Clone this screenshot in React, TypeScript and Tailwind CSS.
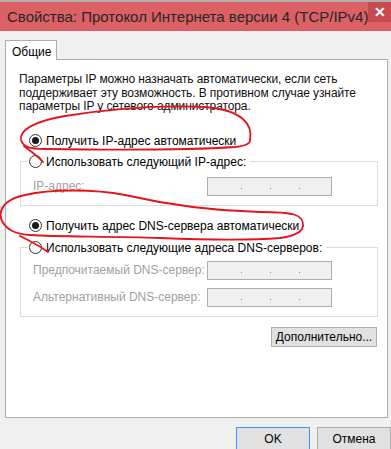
import React from "react";

const font = { fontFamily: '"Liberation Sans", Arial, sans-serif' };

const Radio = ({ checked, label }: { checked?: boolean; label: string }) => (
  <span className="flex items-center h-[14px]">
    <span className="w-[13px] h-[13px] rounded-full border border-[#333333] bg-white flex items-center justify-center shrink-0">
      {checked && <span className="w-[7px] h-[7px] rounded-full bg-[#1a1a1a]" />}
    </span>
    <span className="ml-[4px] text-[12px] text-black whitespace-nowrap">{label}</span>
  </span>
);

const IpBox = () => (
  <div className="w-[125px] h-[19px] border border-[#adadad] bg-[#f0f0f0] flex items-center pl-[33px] gap-[28px] shrink-0">
    <span className="w-[1px] h-[1px] mt-[5px] bg-[#9a7a9c]" />
    <span className="w-[1px] h-[1px] mt-[5px] bg-[#9a7a9c]" />
    <span className="w-[1px] h-[1px] mt-[5px] bg-[#9a7a9c]" />
  </div>
);

const FieldRow = ({ label }: { label: string }) => (
  <div className="flex items-center">
    <span className="w-[186px] pl-[12px] text-[12px] text-[#a0a0a0] whitespace-nowrap">{label}</span>
    <IpBox />
  </div>
);

export default function App() {
  return (
    <div className="relative w-[391px] h-[449px] overflow-hidden bg-[#f0f0f0]" style={font}>
      <div className="h-[2px] bg-[#b4aeac]" />
      <div className="flex h-[29px] bg-[#dc6165]">
        <div className="flex-1 pl-[7px] pt-[5px] text-[15px] text-[#262626] whitespace-nowrap leading-[20px]">
          Свойства: Протокол Интернета версии 4 (TCP/IPv4)
        </div>
        <div className="w-[23px] h-[20px] bg-[#c94a4e] flex items-center justify-center text-white text-[14px] font-bold leading-none">
          ✕
        </div>
      </div>
      <div className="flex h-[418px]">
        <div className="w-[2px] bg-[#d9585c]" />
        <div className="flex-1 pl-[5px] pt-[9px]">
          <div className="relative z-10 w-[52px] h-[20px] -mb-[1px] border-l border-t border-r border-[#adadad] bg-white pl-[6px] pt-[2px] text-[12px] text-black">
            Общие
          </div>
          <div className="w-[383px] h-[359px] border border-[#adadad] bg-white pt-[13px] pl-[13px] pr-[9px]">
            <p className="text-[12px] leading-[13.5px] text-[#111] tracking-[-0.1px]">
              Параметры IP можно назначать автоматически, если сеть
              <br />
              поддерживает эту возможность. В противном случае узнайте
              <br />
              параметры IP у сетевого администратора.
            </p>
            <div className="mt-[20px] pl-[10px]">
              <Radio checked label="Получить IP-адрес автоматически" />
            </div>
            <fieldset className="mt-[7px] ml-[1px] border border-[#dcdcdc] px-0 pb-[9px]">
              <legend className="ml-[7px] pl-[1px] pr-[4px]">
                <Radio label="Использовать следующий IP-адрес:" />
              </legend>
              <div className="mt-[8px]">
                <FieldRow label="IP-адрес:" />
              </div>
            </fieldset>
            <div className="mt-[13px] pl-[10px]">
              <Radio checked label="Получить адрес DNS-сервера автоматически" />
            </div>
            <fieldset className="mt-[8px] ml-[1px] border border-[#dcdcdc] px-0 pb-[9px]">
              <legend className="ml-[7px] pl-[1px] pr-[4px]">
                <Radio label="Использовать следующие адреса DNS-серверов:" />
              </legend>
              <div className="mt-[6px] flex flex-col gap-[8px]">
                <FieldRow label="Предпочитаемый DNS-сервер:" />
                <FieldRow label="Альтернативный DNS-сервер:" />
              </div>
            </fieldset>
            <div className="mt-[10px] flex justify-end pr-[1px]">
              <button className="w-[106px] h-[20px] border border-[#adadad] bg-[#e1e1e1] text-[12px] text-black">
                Дополнительно...
              </button>
            </div>
          </div>
          <div className="mt-[9px] flex gap-[7px] pl-[231px]">
            <button className="w-[74px] h-[23px] border border-[#3399ff] bg-[#e1e1e1] text-[12px] text-black shrink-0">
              OK
            </button>
            <button className="w-[74px] h-[23px] border border-[#adadad] bg-[#e1e1e1] text-[12px] text-black shrink-0">
              Отмена
            </button>
          </div>
        </div>
      </div>
      <svg className="absolute inset-0 pointer-events-none" width="391" height="449" viewBox="0 0 391 449" fill="none">
        <path
          d="M250,140 C253,125 243,110 205,107 C165,105 115,108 65,116 C35,121 19,130 21,140 C23,147 30,149 45,149 C110,150 190,150 235,147 C246,146 250,144 250,140 M24,146 C30,151 38,156 43,162"
          stroke="#e5141c"
          strokeWidth="1.8"
          strokeLinecap="round"
        />
        <path
          d="M303,226 C304,214 292,212 260,212 C210,211 160,203 125,195 C95,189 50,189 25,195 C5,199 -3,210 2,221 C7,230 15,234 30,235 C60,237 110,236 160,238 C210,240 255,240 280,238 C295,236 302,232 303,226 M20,236 C30,241 40,246 48,252"
          stroke="#e5141c"
          strokeWidth="1.8"
          strokeLinecap="round"
        />
      </svg>
    </div>
  );
}
